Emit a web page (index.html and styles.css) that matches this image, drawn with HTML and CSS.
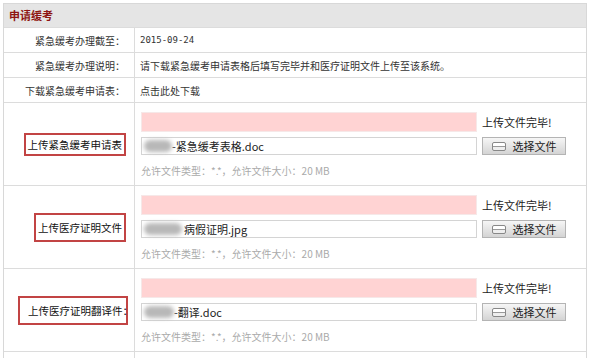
FILE: index.html
```html
<!DOCTYPE html>
<html>
<head>
  <title>申请缓考</title>
  <meta charset="utf-8">
  <link rel="stylesheet" href="styles.css">
</head>
<body>
  <div class="panel">
    <div class="panel-title">申请缓考</div>

    <div class="row">
      <div class="label">紧急缓考办理截至：</div>
      <div class="value date">2015-09-24</div>
    </div>
    <div class="row">
      <div class="label">紧急缓考办理说明：</div>
      <div class="value">请下载紧急缓考申请表格后填写完毕并和医疗证明文件上传至该系统。</div>
    </div>
    <div class="row">
      <div class="label">下载紧急缓考申请表：</div>
      <div class="value">点击此处下载</div>
    </div>

    <div class="row upload-row">
      <div class="label"><span class="mark mark-1">上传紧急缓考申请表</span></div>
      <div class="value upload">
        <div class="line">
          <div class="progress"></div>
          <span class="done">上传文件完毕!</span>
        </div>
        <div class="line">
          <div class="file"><span class="smear s1"></span>-紧急缓考表格.doc</div>
          <button class="pick"><span class="ico"></span>选择文件</button>
        </div>
        <div class="hint">允许文件类型：*.*，允许文件大小：20 MB</div>
      </div>
    </div>

    <div class="row upload-row">
      <div class="label"><span class="mark mark-2">上传医疗证明文件</span></div>
      <div class="value upload">
        <div class="line">
          <div class="progress"></div>
          <span class="done">上传文件完毕!</span>
        </div>
        <div class="line">
          <div class="file"><span class="smear s2"></span>病假证明.jpg</div>
          <button class="pick"><span class="ico"></span>选择文件</button>
        </div>
        <div class="hint">允许文件类型：*.*，允许文件大小：20 MB</div>
      </div>
    </div>

    <div class="row upload-row">
      <div class="label"><span class="mark mark-3">上传医疗证明翻译件：</span></div>
      <div class="value upload">
        <div class="line">
          <div class="progress"></div>
          <span class="done">上传文件完毕!</span>
        </div>
        <div class="line">
          <div class="file"><span class="smear s3"></span>-翻译.doc</div>
          <button class="pick"><span class="ico"></span>选择文件</button>
        </div>
        <div class="hint">允许文件类型：*.*，允许文件大小：20 MB</div>
      </div>
    </div>

    <div class="row last-row">
      <div class="label"></div>
      <div class="value"></div>
    </div>
  </div>
</body>
</html>
```

FILE: styles.css
```css
body {
  margin: 0;
  padding: 3px 0 0 3px;
  background: #fff;
  font-family: "Noto Sans CJK SC", "Liberation Sans", sans-serif;
  font-size: 10px;
  color: #333;
  overflow: hidden;
}

.panel {
  width: 582px;
  border-left: 1px solid #d8d8d8;
  border-right: 1px solid #d8d8d8;
  border-top: 1px solid #d8d8d8;
}

.panel-title {
  height: 23px;
  line-height: 23px;
  padding-left: 5px;
  background: #e5e5e5;
  color: #8e1512;
  font-weight: bold;
  font-size: 11px;
}

.row {
  display: grid;
  grid-template-columns: 131px 1fr;
  border-top: 1px solid #dcdcdc;
  min-height: 24px;
}

.label {
  border-right: 1px solid #dcdcdc;
  padding-right: 9px;
  display: flex;
  align-items: center;
  justify-content: flex-end;
  white-space: nowrap;
  color: #333;
}

.value {
  display: flex;
  align-items: center;
  padding-left: 5px;
  color: #333;
}

.date {
  font-family: "DejaVu Sans Mono", monospace;
  font-size: 9px;
}

.upload-row {
  height: 82px;
}

.upload {
  flex-direction: column;
  align-items: flex-start;
  justify-content: flex-start;
  padding-top: 9px;
  padding-left: 6px;
}

.line {
  display: flex;
  align-items: center;
  gap: 5px;
  margin-bottom: 5px;
}

.progress {
  width: 334px;
  height: 18px;
  background: #ffd3d3;
  border: 1px solid #f6e8e8;
}

.done {
  color: #222;
  font-size: 11px;
}

.file {
  width: 334px;
  height: 16px;
  border: 1px solid #d4d4d4;
  display: flex;
  align-items: center;
  font-size: 11px;
  color: #222;
  background: #fff;
}

.smear {
  display: inline-block;
  height: 12px;
  background: #b8b8b8;
  border-radius: 6px;
  filter: blur(2px);
  margin-left: 2px;
}

.s1 { width: 28px; }
.s2 { width: 38px; margin-right: 2px; }
.s3 { width: 30px; }

.pick {
  width: 84px;
  height: 18px;
  padding: 0;
  border: 1px solid #b4b4b4;
  background: linear-gradient(#f6f6f6, #d4d4d4);
  font-family: inherit;
  font-size: 11px;
  color: #222;
  display: flex;
  align-items: center;
  justify-content: center;
  gap: 7px;
}

.ico {
  width: 12px;
  height: 7px;
  border: 1px solid #888;
  border-radius: 2px;
  background: linear-gradient(#fff 45%, #999 45%, #999 60%, #eee 60%);
}

.hint {
  color: #aaa;
  margin-top: 3px;
}

.mark {
  display: inline-block;
  border: 2px solid #c24444;
  color: #111;
  font-size: 10.5px;
}

.mark-1 { padding: 2px 2px; margin-right: -1px; }
.mark-2 { padding: 5px 2px; margin-right: -1px; }
.mark-3 {
  width: 98px;
  padding: 5px 0 5px 8px;
  margin-right: -3px;
  overflow: visible;
}

.last-row {
  min-height: 10px;
}
```
